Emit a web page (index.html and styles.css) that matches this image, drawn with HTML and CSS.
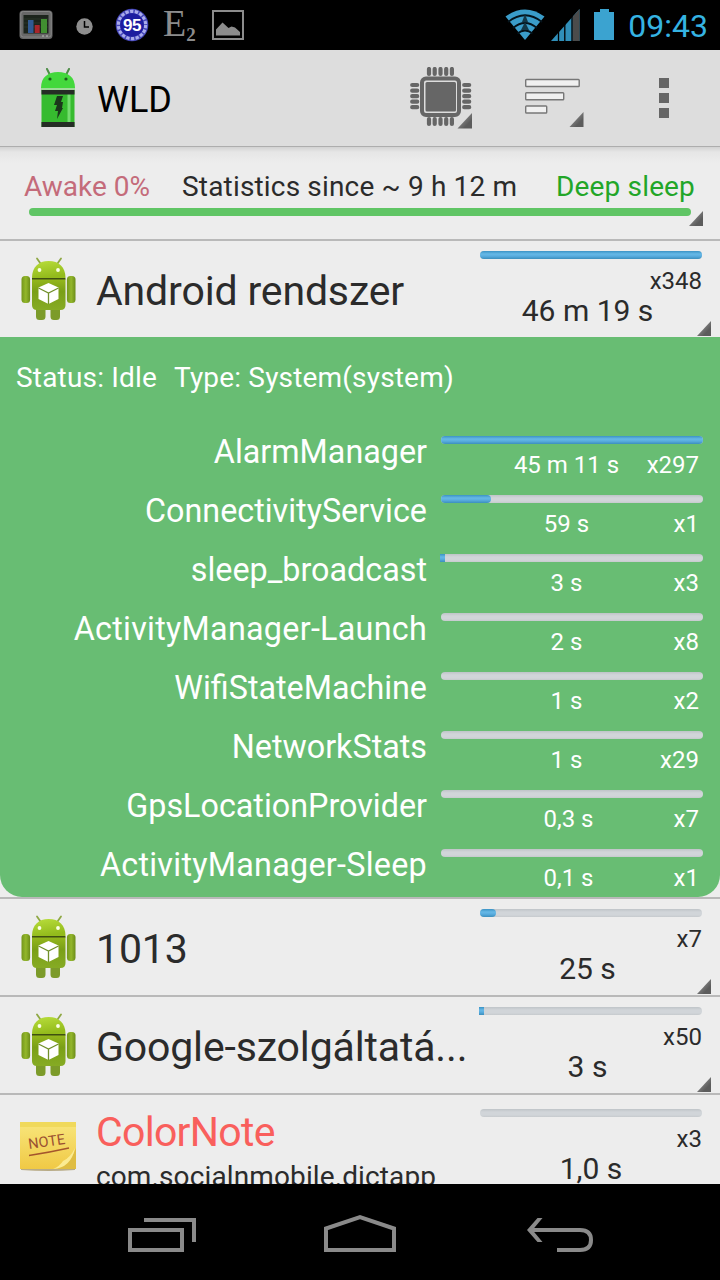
FILE: index.html
```html
<!DOCTYPE html>
<html lang="hu">
<head>
    <meta charset="UTF-8">
    <meta name="viewport" content="width=device-width, initial-scale=1.0">
    <title>WLD</title>
    <link rel="stylesheet" href="styles.css">
</head>
<body>
<svg class="defs" width="0" height="0">
    <defs>
        <linearGradient id="droidHead" x1="0" y1="0" x2="0.3" y2="1">
            <stop offset="0" stop-color="#b9de3c"/>
            <stop offset="1" stop-color="#93bb1c"/>
        </linearGradient>
        <linearGradient id="droidBody" x1="0" y1="0" x2="0" y2="1">
            <stop offset="0" stop-color="#95b81c"/>
            <stop offset="0.4" stop-color="#7a9f16"/>
            <stop offset="1" stop-color="#86ab24"/>
        </linearGradient>
        <linearGradient id="droidArm" x1="0" y1="0" x2="1" y2="0">
            <stop offset="0" stop-color="#74961b"/>
            <stop offset="0.5" stop-color="#93b72b"/>
            <stop offset="1" stop-color="#6c8d19"/>
        </linearGradient>
        <symbol id="droid" viewBox="0 0 56 64">
            <path d="M17 1.500l3.500 5M41 1.500l-3.500 5" stroke="#8fa844" stroke-width="1.800" stroke-linecap="round"/>
            <path d="M12 21C12 10 18.500 4 28.700 4S45.500 10 45.500 21z" fill="url(#droidHead)"/>
            <circle cx="19.500" cy="13" r="1.900" fill="#fbffe6"/>
            <circle cx="38" cy="13" r="1.900" fill="#fbffe6"/>
            <rect x="1.500" y="19" width="8.600" height="27" rx="3.500" fill="url(#droidArm)"/>
            <rect x="46.900" y="19" width="8.600" height="27" rx="3.500" fill="url(#droidArm)"/>
            <path d="M16 48h9.500v11.500a3.500 3.500 0 0 1-3.500 3.500h-2.500a3.500 3.500 0 0 1-3.500-3.500zM30.500 48h9.500v11.500a3.500 3.500 0 0 1-3.500 3.500h-2.500a3.500 3.500 0 0 1-3.500-3.500z" fill="#7c9b2a"/>
            <path d="M12 22h33.500v26q0 5-5 5h-23.500q-5 0-5-5z" fill="url(#droidBody)"/>
            <path d="M12 21.800h33.500" stroke="#3f5010" stroke-width="1.400"/>
            <path d="M28.500 26l10 4.600v11.400l-10 5-10-5v-11.400z" fill="#fff"/>
            <path d="M18.500 31l10 5 10-5M28.500 36v11" fill="none" stroke="#71902a" stroke-width="1.300"/>
        </symbol>
        <linearGradient id="cornerFill" x1="0.300" y1="0.300" x2="1" y2="1">
            <stop offset="0" stop-color="#8a8a8a"/>
            <stop offset="0.600" stop-color="#5c5c5c"/>
        </linearGradient>
        <symbol id="corner" viewBox="0 0 14 15">
            <path d="M14 0v15H0z" fill="url(#cornerFill)"/>
        </symbol>
    </defs>
</svg>

<div class="screen">
    <header class="status-bar">
        <div class="notifications">
            <svg width="34" height="30" viewBox="0 0 34 30">
                <rect x="0.500" y="0.500" width="33" height="28.500" rx="3.500" fill="#686868"/>
                <rect x="1.800" y="1.500" width="30.400" height="25.500" rx="2.500" fill="none" stroke="#8e8e8e" stroke-width="0.800"/>
                <rect x="4.500" y="5" width="25" height="18.500" fill="#1c241c"/>
                <path d="M5 9h24M5 13h24M5 17h24" stroke="#334234" stroke-width="0.600"/>
                <rect x="9" y="10" width="5.500" height="13" fill="#315a93"/>
                <rect x="15.700" y="15" width="5" height="8" fill="#a8262b"/>
                <rect x="22" y="9" width="6" height="14" fill="#418f31"/>
                <path d="M23 26h2M27 26h2" stroke="#bbb" stroke-width="1.200"/>
            </svg>
            <svg class="clock-icon" width="17" height="17" viewBox="0 0 17 17">
                <circle cx="8.500" cy="8.500" r="8.200" fill="#8e8e8e"/>
                <path d="M8.500 3v6H13" fill="none" stroke="#000" stroke-width="1.500"/>
            </svg>
            <svg class="badge-icon" width="34" height="34" viewBox="0 0 34 34">
                <circle cx="17" cy="17" r="16.300" fill="#4446b8"/>
                <circle cx="17" cy="17" r="13.600" fill="none" stroke="#a9abea" stroke-width="3.200" stroke-dasharray="3.300 1.450"/>
                <circle cx="17" cy="17" r="11.800" fill="#1d1da0"/>
                <text x="17" y="23" class="badge-text">95</text>
            </svg>
            <div class="exp-icon">E<span>2</span></div>
            <svg class="image-icon" width="32" height="30" viewBox="0 0 32 30">
                <rect x="1" y="1" width="30" height="28" fill="none" stroke="#8c8c8c" stroke-width="2"/>
                <path d="M4 25.500v-6l6.500-7 6 5.500 3-1.500 3.500 1 5 4.500v3.500z" fill="#8c8c8c"/>
            </svg>
        </div>
        <div class="system">
            <svg width="40" height="32" viewBox="0 0 40 32">
                <path d="M20 31L0.500 7.500Q20-6.500 39.500 7.500z" fill="#3a9cc9"/>
                <path d="M3 13Q20-0.500 37 13M8 19Q20 9 32 19M12.500 24.500Q20 18.500 27.500 24.500" fill="none" stroke="#04121a" stroke-width="1.700"/>
                <path d="M20 5l-3 8h6zM20 13l-4 8h8z" fill="#133848"/>
            </svg>
            <svg class="signal-icon" width="29" height="32" viewBox="0 0 29 32">
                <path d="M0 32L28.500 0v32z" fill="#308fb9"/>
                <path d="M21.500 8L28.500 0v32h-7z" fill="#4b4b4b"/>
                <path d="M7.500 22v10M13.800 15v17M21 7v25" stroke="#000" stroke-width="1.300"/>
            </svg>
            <svg class="battery-icon" width="20" height="32" viewBox="0 0 20 32">
                <path d="M6 0h9v3h5v28H0V3h6z" fill="#3ba3d0"/>
            </svg>
            <span class="time">09:43</span>
        </div>
    </header>

    <nav class="action-bar">
        <svg class="app-icon" width="36" height="60" viewBox="0 0 36 60">
            <path d="M7 1l3 6M29 1l-3 6" stroke="#4d8d46" stroke-width="2" stroke-linecap="round"/>
            <path d="M1 20C1 9 8 4 18 4s17 5 17 16z" fill="#43d83c"/>
            <circle cx="10" cy="11" r="1.600" fill="#1d5a1c"/>
            <circle cx="26" cy="11" r="1.600" fill="#1d5a1c"/>
            <rect x="1" y="20" width="34" height="2" fill="#9edb98"/>
            <rect x="1.500" y="22" width="33" height="37" fill="#36bb2f"/>
            <rect x="27.500" y="22" width="3" height="34" fill="#75dc70"/>
            <rect x="1.500" y="22" width="33" height="4.500" fill="#252d25"/>
            <rect x="1.500" y="54" width="33" height="5" fill="#252d25"/>
            <path d="M17 28h6l-2 6h2l-1 6h1l-6 11 1-8h-3l2-6h-3z" fill="#1b371b"/>
        </svg>
        <h1>WLD</h1>
        <div class="actions">
            <svg width="62" height="62" viewBox="0 0 62 62">
                <path d="M19 2v5M24.700 2v5M30.500 2v5M36.200 2v5M41.900 2v5M19 52v5M24.700 52v5M30.500 52v5M36.200 52v5M41.900 52v5M2.200 18h5M2.200 23.700h5M2.200 29.200h5M2.200 34.700h5M2.200 40.200h5M54.200 18h5M54.200 23.700h5M54.200 29.200h5M54.200 34.700h5M54.200 40.200h5" stroke="#666" stroke-width="4.200" stroke-linecap="round"/>
                <rect x="12" y="11.500" width="37" height="36.500" rx="4" fill="#ddd" stroke="#666" stroke-width="4"/>
                <rect x="15.500" y="15" width="30.500" height="29.500" rx="1.500" fill="#666"/>
                <path d="M62 46v15.500H47.500z" fill="url(#cornerFill)"/>
            </svg>
            <svg class="sort-icon" width="59" height="50" viewBox="0 0 59 50">
                <g fill="#f0f0f0" stroke="#777" stroke-width="1.400">
                    <rect x="0.700" y="1.500" width="53.500" height="7" rx="0.800"/>
                    <rect x="0.700" y="14.700" width="38" height="7" rx="0.800"/>
                    <rect x="0.700" y="28" width="21" height="7" rx="0.800"/>
                </g>
                <path d="M58.500 34v15H44.500z" fill="url(#cornerFill)"/>
            </svg>
            <div class="overflow"><i></i><i></i><i></i></div>
        </div>
    </nav>

    <main>
        <section class="summary">
            <div class="summary-text">
                <span class="awake">Awake 0%</span>
                <span class="since">Statistics since ~ 9 h 12 m</span>
                <span class="deep">Deep sleep</span>
            </div>
            <div class="summary-bar"></div>
            <svg class="corner" width="14" height="15"><use href="#corner"/></svg>
        </section>

        <section class="app">
            <svg class="icon" width="56" height="64"><use href="#droid"/></svg>
            <h2>Android rendszer</h2>
            <div class="usage">
                <div class="bar"><div class="fill" style="width: 100%"></div></div>
                <div class="count">x348</div>
                <div class="duration">46 m 19 s</div>
            </div>
            <svg class="corner" width="14" height="15"><use href="#corner"/></svg>
        </section>

        <section class="details">
            <p class="status"><span>Status: Idle</span><span>Type: System(system)</span></p>
            <div class="lock">
                <span class="lock-name">AlarmManager</span>
                <div class="lock-usage">
                    <div class="bar"><div class="fill" style="width: 100%"></div></div>
                    <div class="values"><span>45 m 11 s</span><b>x297</b></div>
                </div>
            </div>
            <div class="lock">
                <span class="lock-name">ConnectivityService</span>
                <div class="lock-usage">
                    <div class="bar"><div class="fill" style="width: 19%"></div></div>
                    <div class="values"><span>59 s</span><b>x1</b></div>
                </div>
            </div>
            <div class="lock">
                <span class="lock-name">sleep_broadcast</span>
                <div class="lock-usage">
                    <div class="bar"><div class="fill tiny"></div></div>
                    <div class="values"><span>3 s</span><b>x3</b></div>
                </div>
            </div>
            <div class="lock">
                <span class="lock-name wide">ActivityManager-Launch</span>
                <div class="lock-usage">
                    <div class="bar"></div>
                    <div class="values"><span>2 s</span><b>x8</b></div>
                </div>
            </div>
            <div class="lock">
                <span class="lock-name">WifiStateMachine</span>
                <div class="lock-usage">
                    <div class="bar"></div>
                    <div class="values"><span>1 s</span><b>x2</b></div>
                </div>
            </div>
            <div class="lock">
                <span class="lock-name">NetworkStats</span>
                <div class="lock-usage">
                    <div class="bar"></div>
                    <div class="values"><span>1 s</span><b>x29</b></div>
                </div>
            </div>
            <div class="lock">
                <span class="lock-name">GpsLocationProvider</span>
                <div class="lock-usage">
                    <div class="bar"></div>
                    <div class="values decimal"><span>0,3 s</span><b>x7</b></div>
                </div>
            </div>
            <div class="lock">
                <span class="lock-name wide">ActivityManager-Sleep</span>
                <div class="lock-usage">
                    <div class="bar"></div>
                    <div class="values decimal"><span>0,1 s</span><b>x1</b></div>
                </div>
            </div>
        </section>

        <section class="app divided">
            <svg class="icon" width="56" height="64"><use href="#droid"/></svg>
            <h2>1013</h2>
            <div class="usage">
                <div class="bar"><div class="fill" style="width: 7.2%"></div></div>
                <div class="count">x7</div>
                <div class="duration">25 s</div>
            </div>
            <svg class="corner" width="14" height="15"><use href="#corner"/></svg>
        </section>

        <section class="app divided">
            <svg class="icon" width="56" height="64"><use href="#droid"/></svg>
            <h2>Google-szolgáltatá...</h2>
            <div class="usage">
                <div class="bar"><div class="fill tiny"></div></div>
                <div class="count">x50</div>
                <div class="duration">3 s</div>
            </div>
            <svg class="corner" width="14" height="15"><use href="#corner"/></svg>
        </section>

        <section class="app divided tall">
            <svg class="icon note" width="56" height="52" viewBox="0 0 56 52">
                <defs>
                    <linearGradient id="paper" x1="0" y1="0" x2="0" y2="1">
                        <stop offset="0" stop-color="#f8e67c"/>
                        <stop offset="1" stop-color="#f0c945"/>
                    </linearGradient>
                </defs>
                <path d="M1 47h40l14-4v6q-26 2-54 0z" fill="#b8ab86"/>
                <path d="M0 1h56v27q0 20-22 20H0z" fill="url(#paper)"/>
                <path d="M0 1h56v5H0z" fill="#f0d95c"/>
                <path d="M56 27v21H33q8-2 11-5 8-5 12-16z" fill="#dfbd43"/>
                <path d="M55 27q-5 10-12 13-3 5-10 8 18-1 22-21z" fill="#fbeb93"/>
                <text class="note-text" x="9" y="28" transform="rotate(-8 9 28)">NOTE</text>
                <path d="M9 34.500q20-3 40-7.500" fill="none" stroke="#a4552c" stroke-width="1.300"/>
            </svg>
            <div class="names">
                <h2>ColorNote</h2>
                <p>com.socialnmobile.dictapp</p>
            </div>
            <div class="usage">
                <div class="bar"></div>
                <div class="count">x3</div>
                <div class="duration">1,0 s</div>
            </div>
        </section>
    </main>

    <footer class="nav-bar">
        <svg width="70" height="36" viewBox="0 0 70 36">
            <path d="M2 13h52v20H2zM16 3h50v22" fill="none" stroke="#8a8a8a" stroke-width="4"/>
        </svg>
        <svg class="home" width="72" height="40" viewBox="0 0 72 40">
            <path d="M2 36V14.500L36 3l34 11.500V36z" fill="none" stroke="#8a8a8a" stroke-width="4"/>
        </svg>
        <svg class="back" width="68" height="36" viewBox="0 0 68 36">
            <path d="M5 13h48q11 0 11 10t-11 10H30" fill="none" stroke="#8a8a8a" stroke-width="4"/>
            <path d="M10.500 1h5L5.500 13l10 12h-5L0 13z" fill="#8a8a8a"/>
        </svg>
    </footer>
</div>
</body>
</html>
```

FILE: styles.css
```css
* {
    box-sizing: border-box;
}

body {
    margin: 0;
    background-color: #000;
    font-family: Roboto, "Noto Sans", sans-serif;
    color: #2b2b2b;
}

h1, h2, p {
    margin: 0;
    font-weight: 400;
}

svg {
    flex: none;
    display: block;
}

.defs {
    position: absolute;
}

.screen {
    width: 720px;
    height: 1280px;
    display: flex;
    flex-direction: column;
    overflow: hidden;
}

/* status bar */
.status-bar {
    height: 50px;
    flex: none;
    display: flex;
    justify-content: space-between;
    padding: 0 12px 0 19px;
    background-color: #000;
}

.notifications, .system {
    display: flex;
    align-items: center;
}

.clock-icon {
    margin: 2px 0 0 23px;
}

.badge-icon {
    margin-left: 22px;
}

.badge-text {
    fill: #fff;
    font: bold 17px "Liberation Sans", sans-serif;
    text-anchor: middle;
    letter-spacing: -0.5px;
}

.exp-icon {
    width: 33px;
    height: 50px;
    margin-left: 14px;
    display: flex;
    font: 38px/46px "Liberation Serif", serif;
    color: #8c8c8c;
}

.exp-icon span {
    font-size: 19px;
    font-weight: bold;
    line-height: 69px;
}

.image-icon {
    margin-left: 16px;
}

.signal-icon {
    margin: 0 0 0 6px;
}

.battery-icon {
    margin-left: 14px;
}

.time {
    margin-left: 14px;
    padding-top: 2px;
    font-size: 32px;
    color: #35b3e2;
}

/* action bar */
.action-bar {
    height: 97px;
    flex: none;
    display: flex;
    align-items: center;
    padding-left: 40px;
    background-color: #dddddd;
    border-bottom: 1px solid #adadad;
}

.action-bar h1 {
    width: 334px;
    padding: 3px 0 0 21px;
    font-size: 36px;
    color: #000;
}

.actions {
    display: flex;
    align-items: center;
}

.sort-icon {
    margin: 9px 0 0 53px;
}

.overflow {
    margin: 0 0 0 75px;
    display: flex;
    flex-direction: column;
    gap: 5px;
}

.overflow i {
    width: 10px;
    height: 10px;
    background-color: #666;
}

main {
    flex: 1;
    min-height: 0;
    overflow: hidden;
    background-color: #ededed;
}

/* summary */
.summary {
    position: relative;
    height: 94px;
    padding: 22px 25px 0 24px;
    border-bottom: 2px solid #b9b9b9;
    background: linear-gradient(#d2d2d2, #e6e6e6 5px, #ededed 16px);
}

.summary-text {
    display: flex;
    font-size: 28px;
    line-height: 36px;
    white-space: nowrap;
}

.awake {
    color: #c46b7a;
}

.since {
    margin-left: 32px;
    letter-spacing: 0.17px;
}

.deep {
    margin-left: auto;
    letter-spacing: 0.15px;
    color: #22a628;
}

.summary-bar {
    height: 8px;
    margin: 3px 4px 0 5px;
    border-radius: 4px;
    background-color: #60c565;
}

.corner {
    position: absolute;
    right: 9px;
    bottom: 1px;
}

.summary .corner {
    right: 17px;
    bottom: 13px;
}

/* application rows */
.app {
    position: relative;
    height: 96px;
    display: flex;
    align-items: center;
    padding: 0 18px 0 20px;
}

.app.divided {
    height: 98px;
    border-top: 2px solid #b9b9b9;
}

.app h2 {
    flex: 1;
    padding: 4px 0 0 20px;
    font-size: 41px;
    line-height: 48px;
    letter-spacing: -0.15px;
    white-space: nowrap;
}

.usage {
    width: 222px;
    height: 96px;
    padding-top: 10px;
}

.bar {
    height: 8px;
    border-radius: 4px;
    background: linear-gradient(#bfc4c8, #d1d5d9 3px, #d1d5d9 6px, #c6cacd);
}

.fill {
    height: 8px;
    border-radius: 4px;
    background: linear-gradient(#3b93c5, #66b8e6 3px, #5aaee0 5px, #3c8fbe);
}

.fill.tiny {
    width: 5px;
    margin-left: -1px;
    border-radius: 0;
}

.count {
    height: 28px;
    margin-top: 8px;
    font-size: 24px;
    line-height: 28px;
    text-align: right;
}

.duration {
    margin: -2px 7px 0 0;
    font-size: 30px;
    line-height: 36px;
    text-align: center;
}

.app.tall {
    height: 106px;
}

.tall .names {
    flex: 1;
    height: 100%;
    padding: 12px 0 0 20px;
}

.app.tall h2 {
    padding: 0;
    line-height: 50px;
    letter-spacing: -0.7px;
    color: #f95f5c;
}

.tall p {
    font-size: 28px;
    line-height: 36px;
    margin-top: 2px;
    letter-spacing: 0.12px;
}

.tall .usage {
    height: 100%;
    padding-top: 14px;
}

.tall .duration {
    margin-right: 0;
}

.note-text {
    fill: #9b5031;
    font: 14.5px Roboto, sans-serif;
}

/* wakelock details */
.details {
    height: 560px;
    border-radius: 0 0 22px 22px;
    background-color: #68bd73;
    color: #fff;
}

.status {
    height: 88px;
    padding: 23px 0 0 16px;
    display: flex;
    gap: 17px;
    font-size: 28px;
    line-height: 36px;
    letter-spacing: 0.18px;
}

.lock {
    height: 59px;
    display: flex;
    padding-right: 17px;
}

.lock-name {
    width: 427px;
    font-size: 32.3px;
    line-height: 55px;
    text-align: right;
}

.lock-name.wide {
    letter-spacing: 0.27px;
}

.lock-usage {
    width: 262px;
    margin-left: 14px;
    padding-top: 11px;
}

.values {
    position: relative;
    margin-top: 7px;
    padding-right: 11px;
    font-size: 24px;
    line-height: 28px;
    text-align: center;
}

.values.decimal {
    padding-right: 7px;
}

.values b {
    position: absolute;
    right: 4px;
    top: 0;
    font-weight: 400;
}

/* navigation bar */
.nav-bar {
    height: 96px;
    flex: none;
    display: flex;
    align-items: center;
    padding: 6px 0 0 128px;
    background-color: #000;
}

.home {
    margin: 0 131px 2px 126px;
}
```
